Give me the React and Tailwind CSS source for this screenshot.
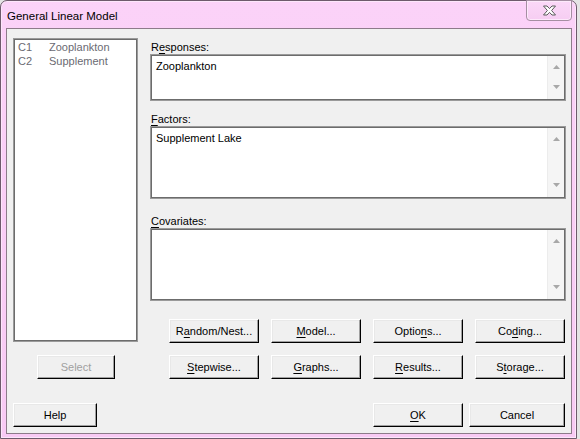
import React from "react";

const U = ({ children }) => (
  <span className="underline underline-offset-[2px] decoration-[1px]">{children}</span>
);

function Btn({ className = "", disabled = false, children }) {
  return (
    <div
      className={`h-[24px] flex items-center justify-center bg-[#f0f0f0] border border-t-[#ffffff] border-l-[#ffffff] border-b-[#000000] border-r-[#000000] shadow-[inset_-1px_-1px_0_#a0a0a0,inset_1px_1px_0_#e8e8e8] text-[11px] leading-[13px] ${
        disabled ? "text-[#a0a0a0]" : "text-black"
      } ${className}`}
    >
      {children}
    </div>
  );
}

function Arrow({ up }) {
  return (
    <svg width="7" height="4" viewBox="0 0 7 4">
      {up ? (
        <polygon points="0,4 7,4 3.5,0" fill="#a8a8a8" />
      ) : (
        <polygon points="0,0 7,0 3.5,4" fill="#a8a8a8" />
      )}
    </svg>
  );
}

function Box({ className = "", text }) {
  return (
    <div
      className={`flex w-[416px] border border-[#9a9a9a] shadow-[inset_0_0_0_1px_#6c6c6c] bg-white p-[1px] ${className}`}
    >
      <div className="flex-1 pl-[4px] pt-[3px] text-[11px] leading-[14px] text-black bg-white">
        {text}
      </div>
      <div className="w-[17px] bg-[#f5f5f5] border-l border-[#ececec] flex flex-col justify-between items-center pt-[9px] pb-[10px]">
        <Arrow up />
        <Arrow />
      </div>
    </div>
  );
}

export default function App() {
  return (
    <div
      className="w-[580px] h-[439px] bg-[#e4e4e4] overflow-hidden"
      style={{ fontFamily: '"Liberation Sans", Arial, sans-serif' }}
    >
      <div className="w-[577px] h-[439px] flex flex-col rounded-t-[7px] border border-[#6e5a6c] bg-gradient-to-b from-[#fbd2f8] to-[#f8caf4] shadow-[inset_0_0_0_1px_#fde6fb]">
        {/* Title bar */}
        <div className="h-[27px] flex items-start relative">
          <div className="pl-[6px] pt-[9px] text-[11.5px] leading-[13px] text-black">
            General Linear Model
          </div>
          <div className="absolute right-[4px] top-[-1px] w-[46px] h-[21px] rounded-b-[4px] border border-[#a58ea2] bg-gradient-to-b from-[#fbd8f8] to-[#f6cdf2] shadow-[inset_0_0_0_1px_#fde9fb] flex items-center justify-center">
            <svg width="15" height="11" viewBox="0 0 15 11">
              <path
                d="M1.5 1 H5 L7.5 3.6 L10 1 H13.5 L9.6 5.5 L13.5 10 H10 L7.5 7.4 L5 10 H1.5 L5.4 5.5 Z"
                fill="#ffffff"
                stroke="#5b5b5b"
                strokeWidth="1"
                strokeLinejoin="round"
              />
            </svg>
          </div>
        </div>

        {/* Client area */}
        <div className="ml-[5px] mr-[4px] mb-[4px] flex-1 border border-[#8d7b8a] bg-[#f0f0f0] flex flex-col">
          <div className="flex pl-[6px] pt-[9px]">
            {/* Left column */}
            <div className="w-[125px] flex flex-col">
              <div className="h-[304px] border border-[#9a9a9a] shadow-[inset_0_0_0_1px_#6c6c6c] bg-white p-[1px]">
                <div className="pl-[3px] text-[11px] leading-[14px] text-[#6a6a72]">
                  <div className="flex">
                    <span className="w-[31px]">C1</span>
                    <span>Zooplankton</span>
                  </div>
                  <div className="flex">
                    <span className="w-[31px]">C2</span>
                    <span>Supplement</span>
                  </div>
                </div>
              </div>
              <div className="mt-[13px] ml-[24px]">
                <Btn className="w-[78px]" disabled>
                  Select
                </Btn>
              </div>
            </div>

            {/* Right column */}
            <div className="ml-[12px] flex flex-col pt-[3px]">
              <div className="pl-[1px] h-[13px] text-[11px] leading-[13px] text-black">
                R<U>e</U>sponses:
              </div>
              <Box className="h-[47px]" text="Zooplankton" />
              <div className="mt-[12px] pl-[1px] h-[13px] text-[11px] leading-[13px] text-black">
                <U>F</U>actors:
              </div>
              <Box className="h-[73px]" text="Supplement Lake" />
              <div className="mt-[16px] pl-[1px] h-[13px] text-[11px] leading-[13px] text-black">
                <U>C</U>ovariates:
              </div>
              <Box className="h-[73px]" text="" />

              <div className="mt-[18px] ml-[19px] flex gap-[12px]">
                <Btn className="w-[90px]">
                  R<U>a</U>ndom/Nest...
                </Btn>
                <Btn className="w-[90px]">
                  <U>M</U>odel...
                </Btn>
                <Btn className="w-[90px]">
                  Optio<U>n</U>s...
                </Btn>
                <Btn className="w-[90px]">
                  Co<U>d</U>ing...
                </Btn>
              </div>
              <div className="mt-[12px] ml-[19px] flex gap-[12px]">
                <Btn className="w-[90px]">
                  <U>S</U>tepwise...
                </Btn>
                <Btn className="w-[90px]">
                  <U>G</U>raphs...
                </Btn>
                <Btn className="w-[90px]">
                  <U>R</U>esults...
                </Btn>
                <Btn className="w-[90px]">
                  S<U>t</U>orage...
                </Btn>
              </div>
            </div>
          </div>

          {/* Bottom row */}
          <div className="mt-[24px] flex pl-[6px] pr-[6px]">
            <Btn className="w-[84px]">Help</Btn>
            <div className="flex-1" />
            <Btn className="w-[90px]">
              <U>O</U>K
            </Btn>
            <Btn className="w-[96px] ml-[6px]">Cancel</Btn>
          </div>
        </div>
      </div>
    </div>
  );
}
